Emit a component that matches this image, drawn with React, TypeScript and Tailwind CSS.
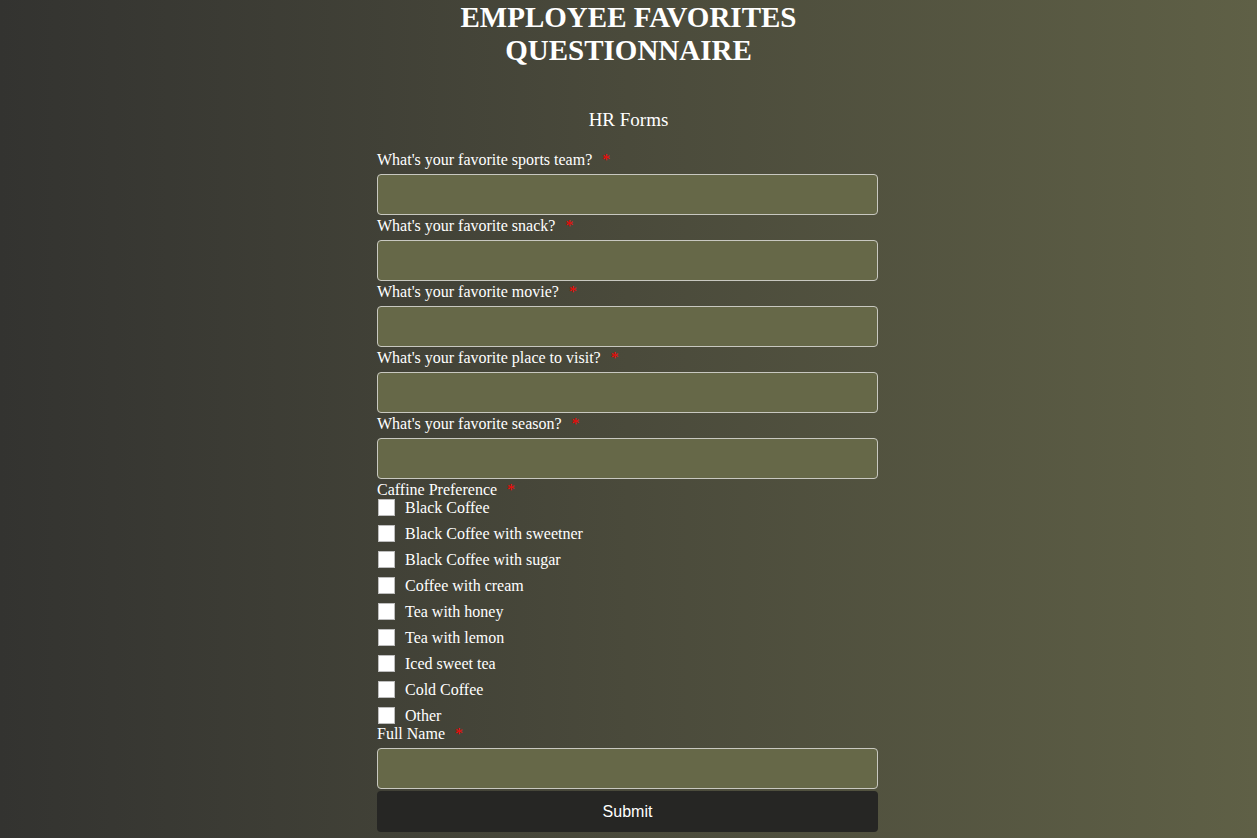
const questions = [
  "What's your favorite sports team?",
  "What's your favorite snack?",
  "What's your favorite movie?",
  "What's your favorite place to visit?",
  "What's your favorite season?",
];

const caffeine = [
  "Black Coffee",
  "Black Coffee with sweetner",
  "Black Coffee with sugar",
  "Coffee with cream",
  "Tea with honey",
  "Tea with lemon",
  "Iced sweet tea",
  "Cold Coffee",
  "Other",
];

function Label({ text }: { text: string }) {
  return (
    <label className="block h-[18px] leading-[18px] text-[16px] text-white">
      {text}
      <span className="ml-[10px] text-[#ff0000]">*</span>
    </label>
  );
}

function TextField({ text }: { text: string }) {
  return (
    <div>
      <Label text={text} />
      <input
        type="text"
        className="mt-[5px] mb-[2px] block h-[41px] w-full rounded-[4px] border border-[#c8c8c0] bg-[#666848] px-2 text-white outline-none"
      />
    </div>
  );
}

export default function App() {
  return (
    <div
      className="min-h-[838px] w-full bg-gradient-to-r from-[#333330] via-[#4a4a3b] to-[#5f6046] text-white"
      style={{ fontFamily: '"Liberation Serif", "Times New Roman", serif' }}
    >
      <h1 className="pt-[1px] text-center text-[29px] font-bold leading-[33px]">
        EMPLOYEE FAVORITES
        <br />
        QUESTIONNAIRE
      </h1>

      <p className="mt-[42px] text-center text-[19px] leading-[22px]">HR Forms</p>

      <div className="flex justify-center pr-[2px]">
        <form className="mt-[20px] w-[501px]">
          {questions.map((q) => (
            <TextField key={q} text={q} />
          ))}

          <Label text="Caffine Preference" />
          <div className="flex flex-col gap-[9px]">
            {caffeine.map((c) => (
              <div key={c} className="flex h-[17px] items-center">
                <span className="ml-[1px] h-[17px] w-[17px] border border-[#bdbdbd] bg-white" />
                <span className="ml-[10px] text-[16px] leading-[18px]">{c}</span>
              </div>
            ))}
          </div>

          <div className="mt-[1px]">
            <TextField text="Full Name" />
          </div>

          <button
            type="button"
            className="mt-[1px] block h-[41px] w-full rounded-[4px] bg-[#262624] text-[16px] text-white"
            style={{ fontFamily: '"Liberation Sans", Arial, sans-serif' }}
          >
            Submit
          </button>
        </form>
      </div>
    </div>
  );
}
